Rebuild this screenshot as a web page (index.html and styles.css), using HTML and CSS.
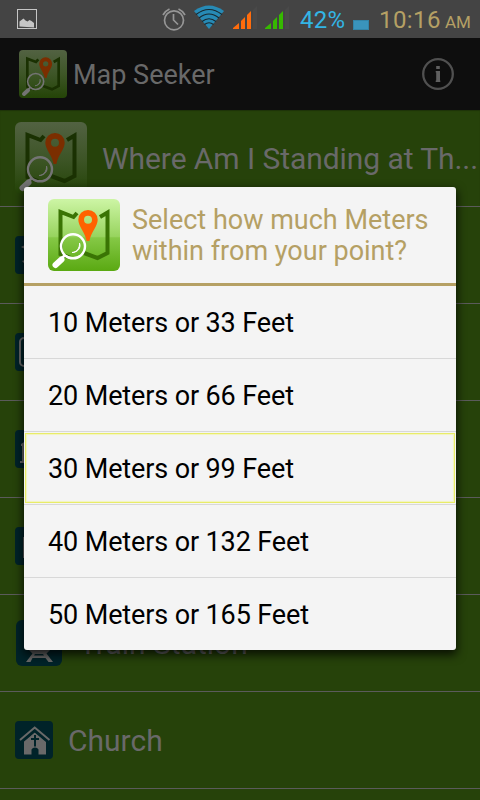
FILE: index.html
```html
<!DOCTYPE html>
<html lang="en">
<head>
    <meta charset="UTF-8">
    <meta name="viewport" content="width=device-width, initial-scale=1.0">
    <title>Map Seeker</title>
    <link rel="stylesheet" href="styles.css">
</head>
<body>
    <!-- Shared app logo -->
    <svg class="defs" width="0" height="0">
        <defs>
            <linearGradient id="logo-bg" x1="0" y1="0" x2="0" y2="1">
                <stop offset="0" stop-color="#cdf5a5"/>
                <stop offset="0.52" stop-color="#98d45f"/>
                <stop offset="0.54" stop-color="#85c846"/>
                <stop offset="1" stop-color="#5aa912"/>
            </linearGradient>
            <linearGradient id="logo-dim" x1="0" y1="0" x2="0" y2="1">
                <stop offset="0" stop-color="#526242"/>
                <stop offset="0.52" stop-color="#3d5526"/>
                <stop offset="1" stop-color="#244407"/>
            </linearGradient>
            <symbol id="logo" viewBox="0 0 72 72">
                <path class="map" d="M29 14L25.500 18L12.500 13V55L23 59M52 18L59.500 13.500V54L49.500 59L36 54"/>
                <path class="pin" fill-rule="evenodd" d="M40 11a9.700 9.700 0 0 0-9.700 9.700C30.300 27 37 33 38.600 42h2.800C43 33 49.700 27 49.700 20.700A9.700 9.700 0 0 0 40 11zm0 5.800a4 4 0 1 1 0 8a4 4 0 1 1 0-8z"/>
                <circle class="lens" cx="25" cy="47.300" r="12"/>
                <path class="glare" d="M31.500 44c2 5-2 9.500-7.500 9.500c4 0 8-4 7.500-9.500z"/>
                <path class="neck" d="M17 56l-3 3"/>
                <path class="handle" d="M13.500 60.500L7.500 66"/>
            </symbol>
        </defs>
    </svg>

    <!-- Status bar -->
    <div class="status-bar">
        <svg class="picture-icon" width="20" height="20" viewBox="0 0 20 20">
            <rect x="0.500" y="0.500" width="19" height="19" fill="none" stroke="#c6c6c6"/>
            <path d="M2.500 17.500v-5l2-1.500 2-1.500 2 2 2 1 2-1.500 2 1 2.500 2v4.500z" fill="#c6c6c6"/>
        </svg>
        <svg class="alarm-icon" width="24" height="24" viewBox="0 0 24 24" fill="none" stroke="#969696" stroke-width="1.700">
            <circle cx="12" cy="13.300" r="9.500"/>
            <path d="M11.500 7v6l4.500 4.500M1 8Q3 4 7.500 2M23 8Q21 4 16.500 2"/>
        </svg>
        <svg class="wifi-icon" width="30" height="24" viewBox="0 0 30 24">
            <path d="M0 6Q15-5 30 6L15 24z" fill="#278ab5"/>
            <path d="M2 9.500Q15-.5 28 9.500M5 13Q15 5 25 13M8 16.500Q15 11 22 16.500M10.500 19.500Q15 16 19.500 19.500" fill="none" stroke="#17272e" stroke-width="1.100"/>
        </svg>
        <svg class="signal orange" width="24" height="24" viewBox="0 0 24 24">
            <path d="M0 23v-1l6-5v6zM8 23v-8l4-4v12zM14 23V9l4-4v18z"/>
            <path class="empty" d="M20 23V4l4-4v23z"/>
        </svg>
        <svg class="signal green" width="24" height="24" viewBox="0 0 24 24">
            <path d="M0 23v-1l6-5v6zM8 23v-8l4-4v12zM14 23V9l4-4v18z"/>
            <path class="empty" d="M20 23V4l4-4v23z"/>
        </svg>
        <span class="percent">42%</span>
        <span class="battery"></span>
        <span class="clock">10:16</span>
        <span class="ampm">AM</span>
    </div>

    <!-- Action bar -->
    <div class="action-bar">
        <svg class="app-logo dim" width="48" height="48" viewBox="0 0 72 72">
            <rect width="72" height="72" rx="6"/>
            <use href="#logo" width="72" height="72"/>
        </svg>
        <span class="app-name">Map Seeker</span>
        <svg class="info-icon" width="32" height="32" viewBox="0 0 32 32">
            <circle cx="16" cy="16" r="14.800" fill="none" stroke="#505050" stroke-width="2.300"/>
            <path d="M14.200 8h3.600v3h-3.600zM13.700 13h4.300v9.500h.3v1.500h-4.600v-1.500h.5v-8h-.5z" fill="#606060"/>
        </svg>
    </div>

    <!-- Places list -->
    <div class="places">
        <div class="place">
            <svg class="dim" width="72" height="72" viewBox="0 0 72 72">
                <rect width="72" height="72" rx="6"/>
                <use href="#logo" width="72" height="72"/>
            </svg>
            <span class="place-name long">Where Am I Standing at Th...</span>
        </div>
        <div class="place">
            <svg class="tile" width="38" height="38" viewBox="0 0 38 38">
                <path d="M6 11l4-2v4zM7 25l3-1v4z"/>
            </svg>
        </div>
        <div class="place">
            <svg class="tile" width="38" height="38" viewBox="0 0 38 38">
                <rect class="outline" x="5" y="5" width="28" height="28" rx="4"/>
            </svg>
        </div>
        <div class="place">
            <svg class="tile" width="38" height="38" viewBox="0 0 38 38">
                <path d="M6 14l13-8v27H5v-2h2V16H6z"/>
            </svg>
        </div>
        <div class="place">
            <svg class="tile" width="38" height="38" viewBox="0 0 38 38">
                <path d="M8 10h20v21H8z"/>
            </svg>
        </div>
        <div class="place">
            <svg class="tile train" width="46" height="46" viewBox="0 0 46 46">
                <path d="M13 5h20v22l3 1-5.500 5.500L37 42h-4.500L29.500 38h-13L14.500 42H10l6.500-8.500L11 28l2-1zM19 34l-1 1.500h10L27 34z" fill-rule="evenodd"/>
            </svg>
            <span class="place-name">Train Station</span>
        </div>
        <div class="place">
            <svg class="tile" width="38" height="38" viewBox="0 0 38 38">
                <path d="M9 20l10.500-9L31 20v13.500h-7.500v-5a4 4 0 0 0-7 0v5H9z"/>
                <path class="roof-gap" d="M7 21L19.700 10.300 32.500 21"/>
                <path class="roof" d="M5 19L19.700 6.500 34.500 19"/>
                <path class="cross" d="M20 14v11.500M16 18h8"/>
            </svg>
            <span class="place-name">Church</span>
        </div>
    </div>

    <!-- Distance dialog -->
    <div class="dialog">
        <div class="dialog-header">
            <svg width="72" height="72" viewBox="0 0 72 72">
                <rect width="72" height="72" rx="6" fill="url(#logo-bg)"/>
                <use href="#logo" width="72" height="72"/>
            </svg>
            <div class="dialog-title">Select how much Meters<br>within from your point?</div>
        </div>
        <div class="option">10 Meters or 33 Feet</div>
        <div class="option">20 Meters or 66 Feet</div>
        <div class="option selected">30 Meters or 99 Feet</div>
        <div class="option">40 Meters or 132 Feet</div>
        <div class="option">50 Meters or 165 Feet</div>
    </div>
</body>
</html>
```
FILE: styles.css
```css
* {
    box-sizing: border-box;
}

body {
    margin: 0;
    height: 800px;
    overflow: hidden;
    font-family: Roboto, "Liberation Sans", sans-serif;
    background-color: #26420a;
    white-space: nowrap;
}

svg {
    display: block;
    flex-shrink: 0;
}

.defs {
    position: absolute;
}

/* Logo */
.map {
    fill: none;
    stroke: var(--map, #3a7404);
    stroke-width: 4;
}

.pin {
    fill: var(--pin, #ff6200);
}

.lens {
    fill: none;
    stroke: var(--lens, #fff);
    stroke-width: 2.4;
}

.glare {
    fill: var(--lens, #fff);
    stroke: var(--lens, #fff);
    stroke-width: 1;
}

.neck {
    stroke: var(--lens, #fff);
    stroke-width: 2.5;
}

.handle {
    stroke: var(--lens, #fff);
    stroke-width: 6;
    stroke-linecap: round;
}

.dim {
    --map: #1a3102;
    --pin: #7b2e00;
    --lens: #747474;
}

.dim > rect {
    fill: url(#logo-dim);
}

/* Status bar */
.status-bar {
    display: flex;
    height: 38px;
    padding-left: 17px;
    background-color: #444;
    line-height: 40px;
}

.picture-icon {
    margin-top: 9px;
}

.alarm-icon {
    margin: 7px 0 0 125px;
}

.wifi-icon {
    margin: 5px 0 0 8px;
}

.signal {
    margin: 6px 0 0 9px;
}

.signal.orange {
    fill: #ff6c0c;
}

.signal.green {
    margin-left: 8px;
    fill: #36b900;
}

.signal .empty {
    fill: #494949;
}

.percent {
    width: 53px;
    margin-left: 11px;
    font-size: 24px;
    letter-spacing: 0.3px;
    color: #33b5e5;
}

.battery {
    width: 16px;
    height: 10px;
    margin-top: 20px;
    background-color: #3a94bc;
    border: 1px solid #3284a8;
}

.clock {
    width: 63px;
    margin-left: 10px;
    font-size: 24px;
    letter-spacing: 0.4px;
    color: #b5a064;
}

.ampm {
    margin-left: 3px;
    padding-top: 2px;
    font-size: 17px;
    color: #b5a064;
}

/* Action bar */
.action-bar {
    display: flex;
    align-items: center;
    height: 72px;
    padding: 0 26px 0 19px;
    background-color: #0e0e0e;
}

.app-name {
    flex: 1;
    margin-left: 6px;
    padding-top: 2px;
    font-size: 27px;
    color: #696969;
}

/* Places */
.places {
    height: 690px;
    overflow: hidden;
}

.place {
    display: flex;
    align-items: center;
    height: 97px;
    padding-left: 15px;
    border-bottom: 1px solid #5b5b5b;
}

.place:first-child {
    box-shadow: inset 0 1px 1px #1e3408;
}

.place-name {
    margin-left: 15px;
    font-size: 30px;
    color: #696969;
}

.place-name.long {
    letter-spacing: -0.07px;
}

.tile {
    background-color: #002329;
    border-radius: 4px;
    fill: #696969;
}

.tile.train {
    margin: 0 2px 0 1px;
    border-radius: 6px;
}

.tile .outline {
    fill: none;
    stroke: #696969;
    stroke-width: 2;
}

.tile .roof {
    fill: none;
    stroke: #696969;
    stroke-width: 2;
}

.tile .roof-gap,
.tile .cross {
    fill: none;
    stroke: #002329;
    stroke-width: 2;
}

/* Dialog */
.dialog {
    position: absolute;
    top: 187px;
    left: 24px;
    width: 432px;
    height: 463px;
    background-color: #f4f4f4;
    border-radius: 3px;
    box-shadow: 0 4px 10px 1px rgba(0, 0, 0, 0.75);
}

.dialog-header {
    display: flex;
    align-items: center;
    height: 99px;
    padding-left: 24px;
    border-bottom: 3px solid #b5a064;
}

.dialog-title {
    margin-left: 12px;
    padding-top: 2px;
    font-size: 27px;
    line-height: 31px;
    color: #b5a064;
}

.option {
    height: 73px;
    padding-left: 24px;
    border-bottom: 1px solid #d8d8d8;
    font-size: 27px;
    line-height: 75px;
    letter-spacing: -0.12px;
    color: #000;
}

.option:last-child {
    border-bottom: none;
}

.option.selected {
    box-shadow: inset 0 0 0 1px #f4f4f4, inset 0 0 0 2px #e8ec68, inset 0 0 1px 3px #f3f4bd;
}
```
